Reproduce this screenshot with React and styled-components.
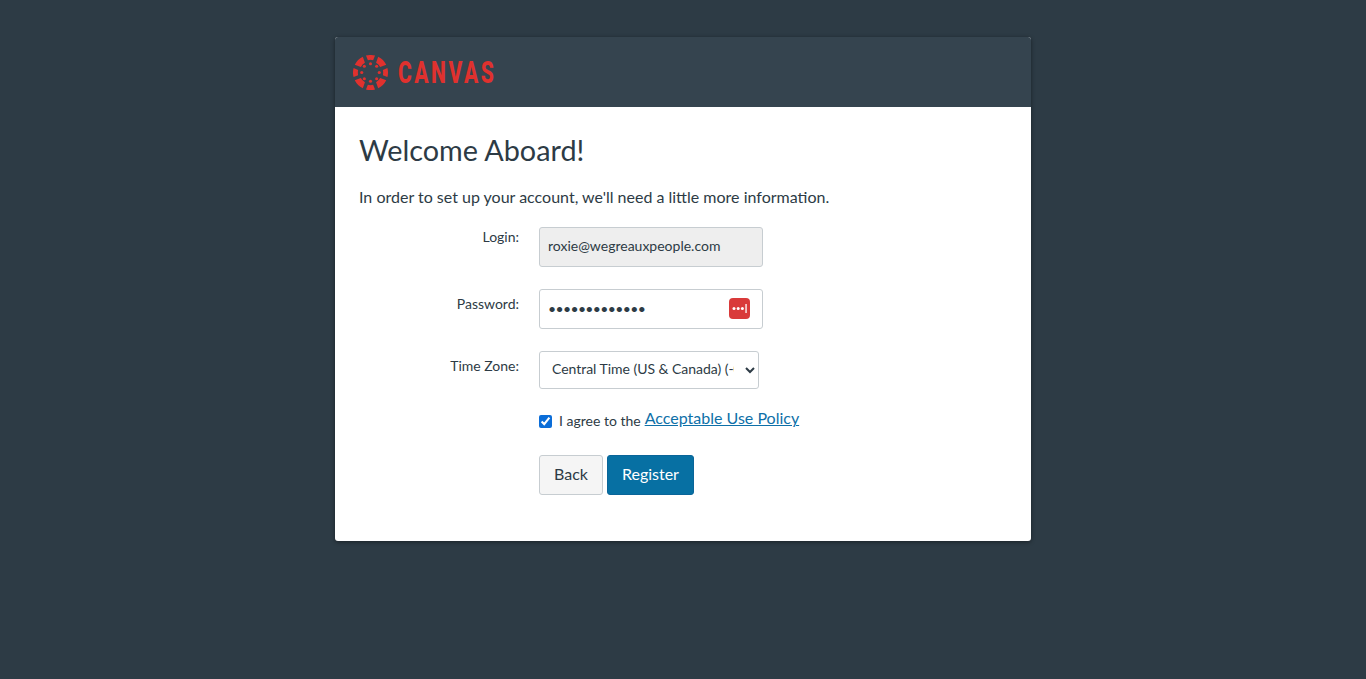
import React from 'react'
import styled, { createGlobalStyle } from 'styled-components'

const GlobalStyle = createGlobalStyle`
  html, body {
    margin: 0;
    min-height: 100%;
    background: #2d3b45;
    font-family: Lato, "Noto Sans", "Liberation Sans", sans-serif;
    color: #2d3b45;
  }
`

const Page = styled.div`
  min-height: 679px;
  padding-top: 37px;
  box-sizing: border-box;
`

const Card = styled.div`
  width: 696px;
  height: 504px;
  margin: 0 auto;
  background: #fff;
  border-radius: 3px;
  overflow: hidden;
  box-shadow: 0 1px 4px rgba(0, 0, 0, 0.45);
`

const Header = styled.div`
  display: flex;
  align-items: center;
  gap: 10px;
  height: 70px;
  padding-left: 18px;
  background: #35444f;
`

const Wordmark = styled.span`
  display: inline-block;
  font-family: Roboto, "Liberation Sans", sans-serif;
  font-weight: 800;
  font-size: 31px;
  line-height: 31px;
  letter-spacing: 3.7px;
  color: #e0312e;
  transform: scaleX(0.68);
  transform-origin: left center;
`

const Body = styled.div`
  padding: 24px 24px 0;
`

const Title = styled.h1`
  margin: 0;
  font-size: 28.8px;
  line-height: 38px;
  font-weight: 400;
  color: #2d3b45;
`

const Intro = styled.p`
  margin: 16px 0 0;
  font-size: 16px;
  line-height: 24px;
`

const Form = styled.form`
  display: grid;
  grid-template-columns: 160px 1fr;
  column-gap: 20px;
  margin-top: 18px;
`

const Label = styled.label`
  justify-self: end;
  padding-top: ${(p) => p.$top}px;
  font-size: 14px;
  line-height: 20px;
  color: #2d3b45;
`

const Field = styled.div`
  position: relative;
  width: 224px;
  height: 40px;
  margin-bottom: ${(p) => p.$gap}px;
`

const Input = styled.input`
  width: 100%;
  height: 100%;
  box-sizing: border-box;
  padding: 0 8px 4px;
  border: 1px solid #c7cdd1;
  border-radius: 3px;
  background: ${(p) => (p.$locked ? '#eeeeee' : '#fff')};
  font-family: inherit;
  font-size: 14px;
  color: #2d3b45;
  outline: none;
  ${(p) => p.type === 'password' && 'letter-spacing: -0.65px; padding-bottom: 2px;'}
`

const PassBadge = styled.svg`
  position: absolute;
  top: 9px;
  right: 13px;
  width: 21px;
  height: 21px;
`

const Select = styled.select`
  display: block;
  width: 220px;
  height: 38px;
  margin-bottom: 21px;
  padding: 0 8px 4px;
  border: 1px solid #c7cdd1;
  border-radius: 3px;
  background: #fff;
  font-family: inherit;
  font-size: 14px;
  letter-spacing: -0.03px;
  color: #2d3b45;
`

const AgreeRow = styled.div`
  display: flex;
  align-items: center;
  height: 18px;
  margin-bottom: 27px;
  font-size: 14px;
`

const Check = styled.input`
  width: 13px;
  height: 13px;
  margin: 4px 7px 0 0;
  accent-color: #0b6dd8;
`

const AgreeText = styled.span`
  margin-top: 3px;
  margin-right: 4px;
`

const PolicyLink = styled.a`
  margin-top: -3px;
  font-size: 16px;
  color: #0e70a8;
  text-decoration: underline;
`

const Buttons = styled.div`
  display: flex;
  gap: 4px;
`

const Button = styled.button`
  height: 40px;
  padding: 0 14px 4px;
  border-radius: 3px;
  border: 1px solid ${(p) => (p.$primary ? '#0a6599' : '#c7cdd1')};
  background: ${(p) => (p.$primary ? '#0770a3' : '#f5f5f5')};
  color: ${(p) => (p.$primary ? '#fff' : '#2d3b45')};
  font-family: inherit;
  font-size: 16px;
`

const CanvasMark = () => {
  const cx = 18
  const cy = 18
  const wedge = (a, half, r1, r2) => {
    const pt = (r, d) => {
      const t = ((d - 90) * Math.PI) / 180
      return `${(cx + r * Math.cos(t)).toFixed(2)} ${(cy + r * Math.sin(t)).toFixed(2)}`
    }
    return `M${pt(r1, a - half)} A${r1} ${r1} 0 0 1 ${pt(r1, a + half)} L${pt(r2, a + half * 0.8)} A${r2} ${r2} 0 0 0 ${pt(r2, a - half * 0.8)} Z`
  }
  const angles = [0, 45, 90, 135, 180, 225, 270, 315]
  return (
    <svg width="35" height="35" viewBox="0 0 36 36" fill="#e0312e">
      {angles.map((a) => (
        <path key={a} d={a % 90 === 0 ? wedge(a, 15, 18, 13) : wedge(a, 19, 18, 11.5)} />
      ))}
      {angles.map((a) => {
        const t = ((a - 90) * Math.PI) / 180
        return <circle key={a} cx={cx + 9 * Math.cos(t)} cy={cy + 9 * Math.sin(t)} r="1.6" />
      })}
    </svg>
  )
}

const App = () => (
  <Page>
    <GlobalStyle />
    <Card>
      <Header>
        <CanvasMark />
        <Wordmark>CANVAS</Wordmark>
      </Header>
      <Body>
        <Title>Welcome Aboard!</Title>
        <Intro>In order to set up your account, we'll need a little more information.</Intro>
        <Form onSubmit={(e) => e.preventDefault()}>
          <Label $top={0}>Login:</Label>
          <Field $gap={22}>
            <Input $locked readOnly value="roxie@wegreauxpeople.com" />
          </Field>
          <Label $top={5}>Password:</Label>
          <Field $gap={22}>
            <Input type="password" readOnly value="abcdefghijklm" />
            <PassBadge viewBox="0 0 21 21">
              <rect width="21" height="21" rx="4" fill="#d93a3a" />
              <circle cx="5" cy="10.5" r="1.5" fill="#fff" />
              <circle cx="9.2" cy="10.5" r="1.5" fill="#fff" />
              <circle cx="13.4" cy="10.5" r="1.5" fill="#fff" />
              <rect x="16.4" y="6" width="1.3" height="9" fill="#fff" />
            </PassBadge>
          </Field>
          <Label $top={5}>Time Zone:</Label>
          <Select defaultValue="ct">
            <option value="ct">Central Time (US &amp; Canada) (-05:00)</option>
          </Select>
          <span />
          <AgreeRow>
            <Check type="checkbox" defaultChecked />
            <AgreeText>I agree to the</AgreeText>
            <PolicyLink href="#">Acceptable Use Policy</PolicyLink>
          </AgreeRow>
          <span />
          <Buttons>
            <Button type="button">Back</Button>
            <Button type="submit" $primary>Register</Button>
          </Buttons>
        </Form>
      </Body>
    </Card>
  </Page>
)

export default App
